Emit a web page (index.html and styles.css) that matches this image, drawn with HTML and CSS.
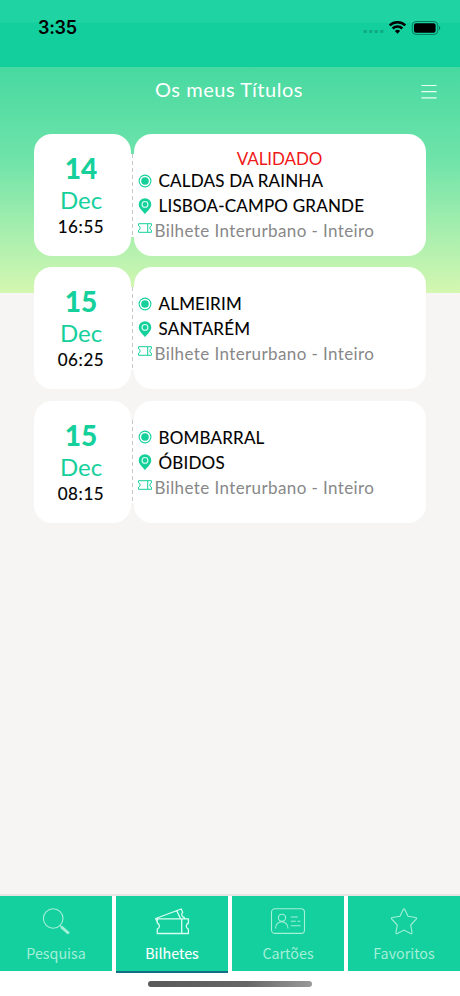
FILE: index.html
```html
<!DOCTYPE html>
<html lang="pt">
<head>
<meta charset="utf-8">
<title>Os meus Títulos</title>
<link rel="stylesheet" href="styles.css">
</head>
<body>
<svg class="defs" width="0" height="0">
  <symbol id="origin" viewBox="0 0 14 14"><circle cx="7" cy="7" r="5.9" fill="none" stroke="#16d09c" stroke-width="1.1"/><circle cx="7" cy="7" r="3.8" fill="#16d09c"/></symbol>
  <symbol id="pin" viewBox="0 0 14 16"><path d="M7 .2A6.300 6.300 0 0 0 .7 6.500C.7 10 4.600 13.300 7 15.900 9.400 13.300 13.300 10 13.300 6.500A6.300 6.300 0 0 0 7 .2Z" fill="#16d09c"/><circle cx="7" cy="6.400" r="2.900" fill="#16d09c" stroke="#d9fff2" stroke-width="1.100"/></symbol>
  <symbol id="ticket" viewBox="0 0 14 10"><path d="M.6.7h12.800v2.200a2.200 2.200 0 0 0 0 4.200v2.200H.6V7.100a2.200 2.200 0 0 0 0-4.200ZM9.700.7v8.600" fill="none" stroke="#16d09c"/></symbol>
</svg>
<div class="app">
  <header class="status">
    <span class="clock">3:35</span>
    <svg class="indicators" width="80" height="18" viewBox="0 0 80 18">
      <g fill="#0eaa81"><rect x="1.500" y="12" width="3.500" height="3" rx="1"/><rect x="7" y="12" width="3.500" height="3" rx="1"/><rect x="12.500" y="12" width="3.500" height="3" rx="1"/><rect x="18" y="12" width="3.500" height="3" rx="1"/></g>
      <g fill="none" stroke="#000" stroke-width="2.500"><path d="M27.700 7.300a11.300 11.300 0 0 1 15.600 0M30.700 10.500a7 7 0 0 1 9.600 0"/></g>
      <path d="M35.500 15.700l-2.600-2.700a3.800 3.800 0 0 1 5.200 0Z"/>
      <rect x="50.300" y="3.500" width="25.500" height="13" rx="3.800" fill="none" stroke="#087e60" stroke-width="1"/>
      <rect x="52" y="5.200" width="21.600" height="9.600" rx="2"/>
      <path d="M77 8v4.200c1.700-.6 1.700-3.600 0-4.200Z" fill="#087e60"/>
    </svg>
  </header>
  <main class="content">
    <div class="titlebar">
      <h1>Os meus Títulos</h1>
      <svg class="menu" width="16" height="16" viewBox="0 0 16 16"><path d="M.5 1.500h15M.5 7.700h15M.5 13.900h15" stroke="#e9fff5" stroke-width="1.200"/></svg>
    </div>
    <section class="list">
      <article class="card">
        <div class="date"><b>14</b><span class="month">Dec</span><time>16:55</time></div>
        <div class="perforation"></div>
        <div class="trip">
          <p class="state">VALIDADO</p>
          <p class="stop"><svg width="14" height="14"><use href="#origin"/></svg><span>CALDAS DA RAINHA</span></p>
          <p class="stop"><svg width="14" height="16"><use href="#pin"/></svg><span>LISBOA-CAMPO GRANDE</span></p>
          <p class="fare"><svg width="14" height="10"><use href="#ticket"/></svg><span>Bilhete Interurbano - Inteiro</span></p>
        </div>
      </article>
      <article class="card">
        <div class="date"><b>15</b><span class="month">Dec</span><time>06:25</time></div>
        <div class="perforation"></div>
        <div class="trip">
          <p class="stop"><svg width="14" height="14"><use href="#origin"/></svg><span>ALMEIRIM</span></p>
          <p class="stop"><svg width="14" height="16"><use href="#pin"/></svg><span>SANTARÉM</span></p>
          <p class="fare"><svg width="14" height="10"><use href="#ticket"/></svg><span>Bilhete Interurbano - Inteiro</span></p>
        </div>
      </article>
      <article class="card">
        <div class="date"><b>15</b><span class="month">Dec</span><time>08:15</time></div>
        <div class="perforation"></div>
        <div class="trip">
          <p class="stop"><svg width="14" height="14"><use href="#origin"/></svg><span>BOMBARRAL</span></p>
          <p class="stop"><svg width="14" height="16"><use href="#pin"/></svg><span>ÓBIDOS</span></p>
          <p class="fare"><svg width="14" height="10"><use href="#ticket"/></svg><span>Bilhete Interurbano - Inteiro</span></p>
        </div>
      </article>
    </section>
  </main>
  <nav class="tabs">
    <a class="tab">
      <svg width="36" height="28" viewBox="0 0 36 28"><circle cx="15.200" cy="10.500" r="9.800"/><path d="M22 17.500l2 2" /><path d="M23.300 18.800l7.500 6.700" stroke-width="3"/></svg>
      <span>Pesquisa</span></a>
    <a class="tab active">
      <svg width="36" height="28" viewBox="0 0 36 28"><path d="M3.300 10.800h31.100v4.400a3.200 3.200 0 0 0 0 6v4.300H3.300v-4.300a3.200 3.200 0 0 0 0-6ZM27.700 10.800v14.700M3.300 14l-1.600-3.500L27.200 1l1.500 3.300a3 3 0 0 0 1.600 5.200l.5 1.200M22.800 2.800l3.700 7.800"/></svg>
      <span>Bilhetes</span></a>
    <a class="tab">
      <svg width="36" height="28" viewBox="0 0 36 28"><rect x="1.500" y=".8" width="33" height="24.600" rx="3.500"/><circle cx="12" cy="9.800" r="3.600"/><path d="M5.500 20.500c0-9 12.500-9 12.500 0M20.800 9h7M20.800 13.200h5M27.500 13.200h2.800M20.800 17.700h9.800"/></svg>
      <span>Cartões</span></a>
    <a class="tab">
      <svg width="36" height="28" viewBox="0 0 36 28"><path d="M17.200 1.500Q18 .2 18.800 1.500L22 8.300 29.800 9.500Q31.200 10 30.200 11.200L24.700 17 26 24.200Q26.200 26.200 24.500 25.500L18 22 11.500 25.500Q9.800 26.200 10 24.200L11.300 17 5.800 11.200Q4.800 10 6.200 9.500L14 8.300Z"/></svg>
      <span>Favoritos</span></a>
  </nav>
  <footer class="home"><i></i></footer>
</div>
</body>
</html>
```

FILE: styles.css
```css
* { box-sizing: border-box; }
body { margin: 0; font-family: Lato, sans-serif; }
.defs { display: block; }
.app { width: 460px; height: 996px; display: flex; flex-direction: column; background: #fff; overflow: hidden; }
.status { height: 67px; flex: none; padding: 18px 18px 0 38px; display: flex; justify-content: space-between; align-items: flex-start; background: linear-gradient(#1fd3a3 0 22px, #13cf9e 23px); }
.clock { font: 600 18px/20px Inter, sans-serif; letter-spacing: -.3px; }
.content { height: 829px; flex: none; background: linear-gradient(#47d9a1, #6ee3a9 40%, #a9efae 74%, #d4f7b1) 0 0 / 100% 226px no-repeat #f6f5f4; border-bottom: 2px solid #e5e5e4; }
.titlebar { height: 67px; display: grid; grid-template-columns: 60px 1fr 60px; align-items: start; }
h1 { grid-column: 2; margin: 8px 2px 0 0; font: 400 20px/28px Lato, sans-serif; letter-spacing: .55px; color: #fff; text-align: center; }
.menu { margin: 17px 0 0 21px; }
.list { padding: 0 34px; display: grid; gap: 11.3px; }
.card { height: 122px; display: grid; grid-template-columns: 97px 3px 1fr; align-items: center; }
.date, .trip { height: 122px; background: #fff; border-radius: 18px; }
.date { display: flex; flex-direction: column; align-items: center; padding: 17px 3px 0 0; }
.date b { font-size: 28px; line-height: 34px; font-weight: 900; color: #16d09c; }
.month { font-size: 24px; line-height: 30px; color: #16d09c; }
time { font-size: 17px; line-height: 23px; letter-spacing: .6px; -webkit-text-stroke: .15px #000; }
.perforation { height: 83px; margin: 0 -1px; background: repeating-linear-gradient(#c5c8c7 0 4px, #fff 4px 7px) 2px 0 / 1px 100% no-repeat #fff; position: relative; }
.trip { padding: 0 0 0 4px; display: flex; flex-direction: column; justify-content: center; }
.trip p { margin: 0; height: 25px; display: flex; align-items: center; font-size: 17px; line-height: 25px; white-space: nowrap; }
.trip .state { height: 20px; line-height: 20px; justify-content: center; color: #f01818; padding: 3px 5px 0 0; letter-spacing: -.1px; }
.trip svg { flex: none; }
.stop svg { margin: 1px 6px 0 0; }
.stop span { padding: 1px 0 0 .5px; }
.trip .stop { letter-spacing: .2px; -webkit-text-stroke: .12px #000; }
.trip .fare { color: #888; letter-spacing: .4px; }
.fare span { padding-top: 1px; }
.fare svg { margin: -4px 2.5px 0 0; }
.tabs { height: 77px; flex: none; display: grid; grid-template-columns: repeat(4, 1fr); column-gap: 4px; align-items: start; }
.tab { height: 75px; background: #14cf9e; color: #a3f0d8; display: flex; flex-direction: column; align-items: center; padding-top: 12px; font: 400 14.3px/22px "Noto Sans CJK SC", sans-serif; }
.tab svg { fill: none; stroke: #a3f0d8; stroke-width: 1.1; margin-bottom: 6px; }
.tab.active { height: 77px; border-bottom: 2px solid #126f83; color: #fff; -webkit-text-stroke: .1px #fff; }
.tab.active svg { stroke: #d5fff0; stroke-width: 1.3; }
.home { flex: 1; display: flex; justify-content: center; align-items: flex-start; padding-top: 8px; }
.home i { width: 164px; height: 6px; border-radius: 3px; background: linear-gradient(90deg, #595959, #666 60%, #999); }
```
